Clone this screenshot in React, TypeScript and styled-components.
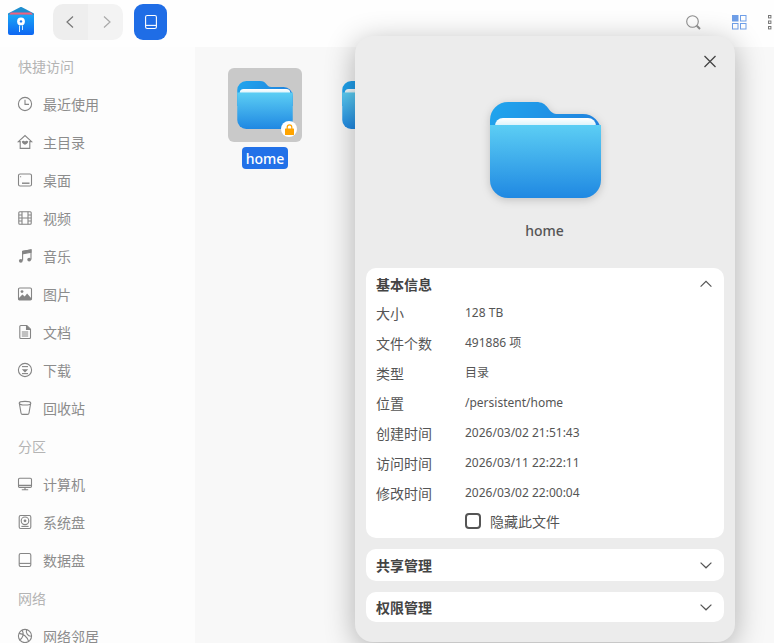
import React from "react";
import styled, { createGlobalStyle } from "styled-components";

const Global = createGlobalStyle`
  html, body { margin: 0; padding: 0; width: 774px; height: 643px; overflow: hidden; }
  * { box-sizing: border-box; }
  body { font-family: "Noto Sans", "Noto Sans CJK SC", sans-serif; }
`;

const Page = styled.div`
  position: relative;
  width: 774px;
  height: 643px;
  overflow: hidden;
  display: flex;
  flex-direction: column;
  background: #fff;
`;
const TopBar = styled.header`
  height: 47px;
  flex: none;
  display: flex;
  align-items: flex-start;
  padding: 4px 0 0 8px;
  background: #fefefe;
`;
const Logo = styled.div`
  width: 26px;
  height: 34px;
  display: flex;
  align-items: center;
  margin-right: 19px;
`;
const NavGroup = styled.div`
  display: flex;
  width: 70px;
  height: 36px;
  border-radius: 10px;
  overflow: hidden;
  margin-right: 11px;
`;
const NavButton = styled.div<{ $dim?: boolean }>`
  flex: 1;
  display: flex;
  align-items: center;
  justify-content: center;
  background: ${(p) => (p.$dim ? "#f3f3f3" : "#eeeeee")};
  color: ${(p) => (p.$dim ? "#aaaaaa" : "#777777")};
  padding: ${(p) => (p.$dim ? "0 0 0 2px" : "0 2px 0 0")};
`;
const BlueButton = styled.div`
  width: 33px;
  height: 36px;
  border-radius: 9px;
  background: #1f6de6;
  display: flex;
  align-items: center;
  justify-content: center;
  color: #fff;
`;
const Tools = styled.div`
  margin-left: auto;
  display: flex;
  align-items: center;
  height: 36px;
  width: 88px;
  flex: none;
  gap: 31px;
`;
const Body = styled.div`
  flex: 1;
  display: flex;
  min-height: 0;
`;
const Sidebar = styled.nav`
  width: 195px;
  flex: none;
  background: #fdfdfd;
  overflow: hidden;
`;
const GroupHead = styled.div`
  height: 38px;
  display: flex;
  align-items: center;
  padding-left: 18px;
  font-size: 14px;
  color: #b4b4b4;
  font-family: "Noto Sans CJK SC", sans-serif;
`;
const NavItem = styled.div`
  height: 38px;
  display: flex;
  align-items: center;
  padding-left: 17px;
  gap: 10px;
  font-size: 14px;
  color: #8c8c8c;
  font-family: "Noto Sans CJK SC", sans-serif;
`;
const Main = styled.main`
  flex: 1;
  background: #f8f8f8;
  display: flex;
  align-items: flex-start;
  gap: 31px;
  padding: 21px 0 0 33px;
`;
const FileCell = styled.div`
  width: 74px;
  flex: none;
  display: flex;
  flex-direction: column;
  align-items: center;
`;
const Tile = styled.div<{ $selected?: boolean }>`
  position: relative;
  width: 74px;
  height: 74px;
  border-radius: 6px;
  background: ${(p) => (p.$selected ? "#c9c9c9" : "transparent")};
  display: flex;
  align-items: flex-start;
  justify-content: center;
  padding-top: 13px;
`;
const LockBadge = styled.div`
  position: absolute;
  left: 53px;
  top: 53px;
  width: 16px;
  height: 16px;
  border-radius: 50%;
  background: #fff;
  display: flex;
  align-items: center;
  justify-content: center;
`;
const FileName = styled.div`
  margin-top: 5px;
  width: 46px;
  height: 22px;
  line-height: 24px;
  text-align: center;
  border-radius: 4px;
  background: #2271e8;
  color: #fff;
  font-size: 14px;
  font-weight: 500;
`;
const Dialog = styled.aside`
  position: absolute;
  left: 355px;
  top: 36px;
  width: 380px;
  height: 606px;
  padding: 0 11px;
  border-radius: 18px;
  background: #ececec;
  box-shadow: 0 6px 30px rgba(0, 0, 0, 0.3);
  display: flex;
  flex-direction: column;
`;
const CloseButton = styled.div`
  position: absolute;
  right: 17px;
  top: 17px;
  width: 16px;
  height: 16px;
  color: #444;
`;
const Hero = styled.div`
  height: 232px;
  flex: none;
  display: flex;
  flex-direction: column;
  align-items: center;
  padding: 66px 0 0 1px;
`;
const HeroFolder = styled.div`
  height: 96px;
  filter: drop-shadow(0 2px 4px rgba(0, 0, 0, 0.18));
`;
const HeroName = styled.div`
  margin: 22px 2px 0 0;
  font-size: 14px;
  line-height: 22px;
  font-weight: 500;
  color: #555;
`;
const Card = styled.section<{ $h: number }>`
  height: ${(p) => p.$h}px;
  flex: none;
  margin-bottom: 11px;
  background: #fff;
  border-radius: 10px;
  padding: 0 11px 0 10px;
`;
const CardHead = styled.div<{ $h: number }>`
  height: ${(p) => p.$h}px;
  display: flex;
  align-items: center;
  justify-content: space-between;
  font-family: "Noto Sans CJK SC", sans-serif;
  font-size: 14px;
  font-weight: 700;
  color: #444;
`;
const Info = styled.div`
  display: flex;
  flex-direction: column;
  margin-top: -2px;
`;
const InfoRow = styled.div`
  height: 30px;
  display: flex;
  align-items: center;
`;
const InfoLabel = styled.div`
  width: 89px;
  flex: none;
  font-family: "Noto Sans CJK SC", sans-serif;
  font-size: 14px;
  color: #555;
`;
const InfoValue = styled.div`
  font-size: 12px;
  color: #555;
  margin-top: -2px;
  font-family: "Noto Sans", "Noto Sans CJK SC", sans-serif;
`;
const HideRow = styled.div`
  display: flex;
  align-items: center;
  gap: 9px;
  height: 26px;
  padding-left: 89px;
  font-family: "Noto Sans CJK SC", sans-serif;
  font-size: 14px;
  color: #555;
`;
const Checkbox = styled.div`
  width: 16px;
  height: 16px;
  border: 2px solid #555;
  border-radius: 4px;
  flex: none;
`;

const Svg: React.FC<{ children: React.ReactNode }> = ({ children }) => (
  <svg width={16} height={16} viewBox="0 0 16 16" fill="none" stroke="#858585" strokeWidth={1.1} style={{ flex: "none", display: "block" }}>
    {children}
  </svg>
);

const icons: Record<string, React.ReactNode> = {
  clock: (<><circle cx="8" cy="8" r="6.6" /><path d="M8 3.8V8.4H12" /></>),
  home: (<><path d="M1.4 7.6 8 1.6l6.6 6H12.8V14.400H3.200V7.600Z" /><path d="M4.800 7.400C5.600 6.400 7.200 6.400 8 7.400C8.800 6.400 10.400 6.400 11.200 7.400C11.200 8.800 9.400 10 8 10.800C6.600 10 4.800 8.800 4.800 7.400Z" fill="#858585" stroke="none" /></>),
  desk: (<><rect x="1.5" y="2" width="13" height="12" rx="1.6" /><path d="M5 11.200h7.500" strokeWidth="1.4" /><path d="M3.600 4.200v1" /></>),
  video: (<><rect x="1.800" y="1.800" width="12.400" height="12.400" rx="1" /><path d="M5 1.800v12.400M11 1.800v12.400M1.800 5h3.200M1.800 8h12.400M1.800 11h3.200M11 5h3.200M11 11h3.200" /></>),
  music: (<><path d="M5.600 12.600V3.400L14 1.800V11.400" /><circle cx="3.800" cy="12.800" r="1.900" fill="#858585" stroke="none" /><circle cx="12.200" cy="11.600" r="1.900" fill="#858585" stroke="none" /><path d="M5.600 3.400 14 1.800v2.400L5.600 5.800z" fill="#858585" /></>),
  image: (<><rect x="1.500" y="2" width="13" height="12" rx="1.200" /><circle cx="5" cy="5.600" r="1.400" fill="#858585" stroke="none" /><path d="M1.500 12.600 5.400 8.600l2.300 2 2.400-3.200 4.400 5V14h-13z" fill="#858585" stroke="none" /></>),
  doc: (<><path d="M2.800 2.500A1 1 0 0 1 3.800 1.500h6L13.500 5.200V13.500a1 1 0 0 1-1 1H3.800a1 1 0 0 1-1-1z" /><path d="M9.500 1.500V5.500h4" fill="#858585" /><path d="M4.800 8h6.400M4.800 10h6.400M4.800 12h6.400" /></>),
  down: (<><circle cx="8" cy="8" r="6.600" /><path d="M5 4.600h6" /><path d="M4.800 7.200h6.400L8 10.600z" fill="#858585" stroke="none" /><path d="M5 11.600h6" /></>),
  trash: (<><ellipse cx="8" cy="3.200" rx="5.800" ry="1.800" /><path d="M2.400 3.600 4 13a1.600 1.600 0 0 0 1.600 1.400h4.800A1.600 1.600 0 0 0 12 13l1.600-9.400" /></>),
  pc: (<><rect x="1.500" y="2.200" width="13" height="9.200" rx="1.200" /><path d="M8 11.400v2.400M4.800 13.800h6.400M1.500 9.400h13" /></>),
  sysdisk: (<><rect x="2.200" y="1.500" width="11.600" height="13" rx="1.400" /><circle cx="8" cy="6.800" r="3.800" /><circle cx="8" cy="6.800" r="1.400" fill="#858585" stroke="none" /><path d="M4.400 12.400h7.200" /></>),
  disk: (<><rect x="2.200" y="1.500" width="11.600" height="13" rx="1.600" /><path d="M2.200 11.400h11.600" /></>),
  net: (<><circle cx="8" cy="8" r="6.600" /><path d="M2 5.400c4 .4 8 3.400 9.600 8M5.200 2.200c2 3.400.8 8.400-3 10M9.600 1.600c-1 3 1 6.800 4.800 6.600" /></>),
};

const sideItems: [string, string][] = [
  ["clock", "最近使用"], ["home", "主目录"], ["desk", "桌面"], ["video", "视频"], ["music", "音乐"],
  ["image", "图片"], ["doc", "文档"], ["down", "下载"], ["trash", "回收站"],
];
const diskItems: [string, string][] = [["pc", "计算机"], ["sysdisk", "系统盘"], ["disk", "数据盘"]];

const info: [string, string][] = [
  ["大小", "128 TB"], ["文件个数", "491886 项"], ["类型", "目录"], ["位置", "/persistent/home"],
  ["创建时间", "2026/03/02 21:51:43"], ["访问时间", "2026/03/11 22:22:11"], ["修改时间", "2026/03/02 22:00:04"],
];

const Folder: React.FC<{ w: number; h: number }> = ({ w, h }) => (
  <svg width={w} height={h} viewBox="0 0 111 96" style={{ display: "block", flex: "none" }}>
    <defs>
      <linearGradient id="fBack" x1="0" y1="0" x2="1" y2="0.3">
        <stop offset="0" stopColor="#20a6ee" />
        <stop offset="1" stopColor="#2082de" />
      </linearGradient>
      <linearGradient id="fFront" x1="0" y1="0" x2="0" y2="1">
        <stop offset="0" stopColor="#5ccef4" />
        <stop offset="1" stopColor="#1f88e2" />
      </linearGradient>
      <linearGradient id="fPaper" x1="0" y1="0" x2="0" y2="1">
        <stop offset="0" stopColor="#ffffff" />
        <stop offset="1" stopColor="#bfe8f6" />
      </linearGradient>
    </defs>
    <path d="M0 18A18 18 0 0 1 18 0H46C52 0 55 2 58 6C61 10 63 12 68 12H93A18 18 0 0 1 111 30V50H0Z" fill="url(#fBack)" />
    <path d="M5 30V24A8 8 0 0 1 13 16H98A8 8 0 0 1 106 24V30Z" fill="url(#fPaper)" />
    <path d="M0 23H111V78A18 18 0 0 1 93 96H18A18 18 0 0 1 0 78Z" fill="url(#fFront)" />
  </svg>
);

const Chevron: React.FC<{ up?: boolean }> = ({ up }) => (
  <svg width="14" height="14" viewBox="0 0 14 14" fill="none" stroke="#555" strokeWidth="1.2" style={{ display: "block" }}>
    <path d={up ? "M1.600 9.600 7 4.400l5.400 5.200" : "M1.600 4.600 7 9.800l5.400-5.200"} />
  </svg>
);

export default function App() {
  return (
    <Page>
      <Global />
      <TopBar>
        <Logo>
          <svg width="26" height="28" viewBox="0 0 26 28" style={{ display: "block" }}>
            <defs>
              <linearGradient id="logoB" x1="0" y1="0" x2="0" y2="1">
                <stop offset="0" stopColor="#1aa6f6" />
                <stop offset="1" stopColor="#0e66f2" />
              </linearGradient>
            </defs>
            <path d="M0 6.500 12.500 0H13.500L26 6.500V10H0z" fill="#1f8ecf" />
            <path d="M3 5.400H23L25 7.800H1z" fill="#f0607e" />
            <path d="M0 7.800h26V26a2 2 0 0 1-2 2H2a2 2 0 0 1-2-2z" fill="url(#logoB)" />
            <circle cx="13" cy="14.400" r="3.900" fill="#fff" />
            <circle cx="13" cy="14.400" r="1.200" fill="#1b7cf0" />
            <path d="M11.500 18.500V25M14.500 18.500V23" stroke="#d6ecff" strokeWidth="1" />
          </svg>
        </Logo>
        <NavGroup>
          <NavButton>
            <svg width="10" height="14" viewBox="0 0 10 14" fill="none" stroke="currentColor" strokeWidth="1.2"><path d="M8 1.500 2 7l6 5.500" /></svg>
          </NavButton>
          <NavButton $dim>
            <svg width="10" height="14" viewBox="0 0 10 14" fill="none" stroke="currentColor" strokeWidth="1.2"><path d="M2 1.500 8 7l-6 5.500" /></svg>
          </NavButton>
        </NavGroup>
        <BlueButton>
          <svg width="16" height="16" viewBox="0 0 16 16" fill="none" stroke="#fff" strokeWidth="1.1"><rect x="2.600" y="1.500" width="10.800" height="13" rx="1.600" /><path d="M2.600 11.400h10.800" /></svg>
        </BlueButton>
        <Tools>
          <svg width="15" height="15" viewBox="0 0 15 15" fill="none" stroke="#8f8f8f" style={{ flex: "none" }}>
            <circle cx="6.500" cy="6.500" r="5.800" strokeWidth="1.100" />
            <path d="M10.800 10.800 14 14" strokeWidth="2" />
          </svg>
          <svg width="15" height="15" viewBox="0 0 15 15" fill="none" stroke="#6f9fe8" strokeWidth="1" style={{ flex: "none" }}>
            <rect x="0.500" y="0.500" width="5.500" height="5.500" fill="#6f9fe8" />
            <rect x="8.500" y="0.500" width="5.500" height="5.500" />
            <rect x="0.500" y="8.500" width="5.500" height="5.500" />
            <rect x="8.500" y="8.500" width="5.500" height="5.500" />
          </svg>
          <svg width="10" height="15" viewBox="0 0 10 15" fill="none" stroke="#777" strokeWidth="1" style={{ flex: "none", marginLeft: "-10px" }}>
            <rect x="0.500" y="0.500" width="2.400" height="2.400" />
            <rect x="0.500" y="6" width="2.400" height="2.400" />
            <rect x="0.500" y="11.500" width="2.400" height="2.400" />
          </svg>
        </Tools>
      </TopBar>
      <Body>
        <Sidebar>
          <GroupHead>快捷访问</GroupHead>
          {sideItems.map(([k, t]) => (
            <NavItem key={t}><Svg>{icons[k]}</Svg>{t}</NavItem>
          ))}
          <GroupHead>分区</GroupHead>
          {diskItems.map(([k, t]) => (
            <NavItem key={t}><Svg>{icons[k]}</Svg>{t}</NavItem>
          ))}
          <GroupHead>网络</GroupHead>
          <NavItem><Svg>{icons.net}</Svg>网络邻居</NavItem>
        </Sidebar>
        <Main>
          <FileCell>
            <Tile $selected>
              <Folder w={56} h={48} />
              <LockBadge>
                <svg width="9" height="11" viewBox="0 0 9 11">
                  <path d="M2.200 5V3.200a2.300 2.300 0 0 1 4.600 0V5" fill="none" stroke="#ffa400" strokeWidth="1.200" />
                  <rect x="0" y="4.400" width="9" height="6.600" rx="0.600" fill="#ffa400" />
                </svg>
              </LockBadge>
            </Tile>
            <FileName>home</FileName>
          </FileCell>
          <FileCell>
            <Tile>
              <Folder w={56} h={48} />
            </Tile>
          </FileCell>
        </Main>
      </Body>
      <Dialog>
        <CloseButton>
          <svg width="16" height="16" viewBox="0 0 16 16" fill="none" stroke="currentColor" strokeWidth="1.300"><path d="M2.500 2 13.500 13M13.500 2 2.500 13" /></svg>
        </CloseButton>
        <Hero>
          <HeroFolder><Folder w={111} h={96} /></HeroFolder>
          <HeroName>home</HeroName>
        </Hero>
        <Card $h={270}>
          <CardHead $h={32}>基本信息<Chevron up /></CardHead>
          <Info>
            {info.map(([l, v]) => (
              <InfoRow key={l}>
                <InfoLabel>{l}</InfoLabel>
                <InfoValue>{v}</InfoValue>
              </InfoRow>
            ))}
          </Info>
          <HideRow><Checkbox />隐藏此文件</HideRow>
        </Card>
        <Card $h={32}>
          <CardHead $h={32}>共享管理<Chevron /></CardHead>
        </Card>
        <Card $h={30}>
          <CardHead $h={30}>权限管理<Chevron /></CardHead>
        </Card>
      </Dialog>
    </Page>
  );
}
